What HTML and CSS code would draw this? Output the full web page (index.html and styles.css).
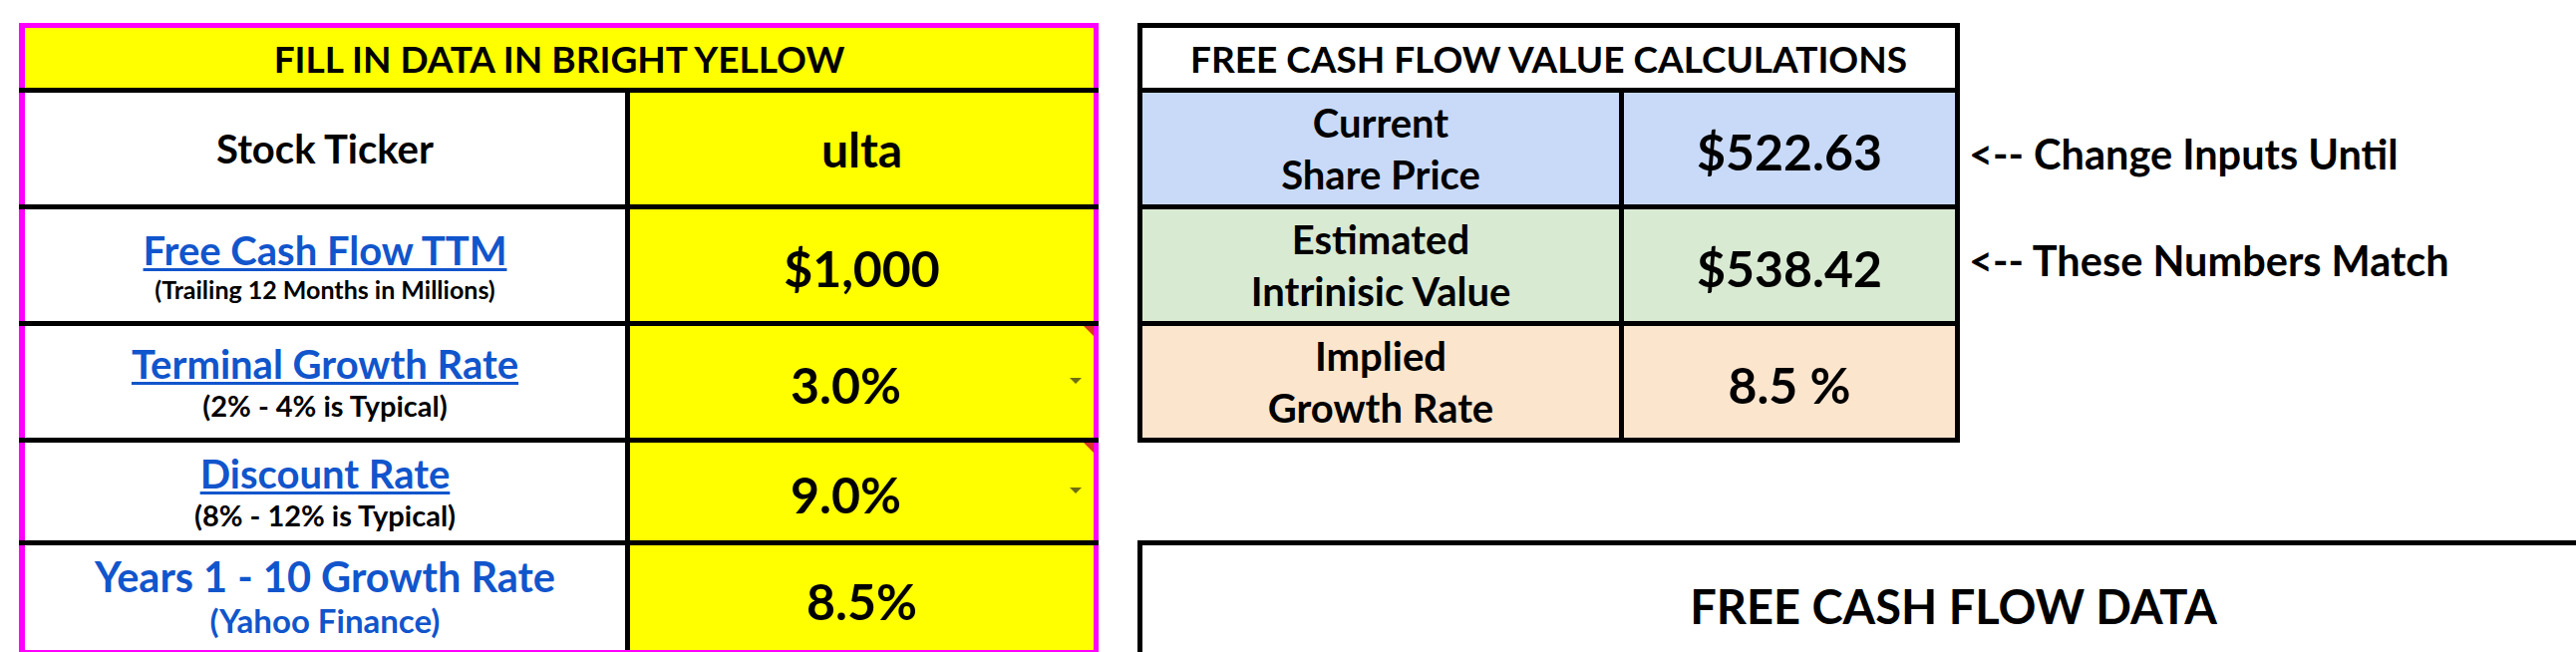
FILE: index.html
```html
<!DOCTYPE html>
<html>
<head>
<meta charset="utf-8">
<link rel="stylesheet" href="styles.css">
</head>
<body>
<div class="sheet">
  <div class="ltable">
    <div class="edge"></div>
    <div class="lhead">FILL IN DATA IN BRIGHT YELLOW</div>
    <div class="sep"></div>
    <div class="lrow h112">
      <div class="lab"><span class="lbl">Stock Ticker</span></div>
      <div class="val ticker">ulta</div>
    </div>
    <div class="sep"></div>
    <div class="lrow h112">
      <div class="lab"><span class="lbl link">Free Cash Flow TTM</span><span class="sub s25">(Trailing 12 Months in Millions)</span></div>
      <div class="val">$1,000</div>
    </div>
    <div class="sep"></div>
    <div class="lrow h112">
      <div class="lab pb2"><span class="lbl link">Terminal Growth Rate</span><span class="sub s29">(2% - 4% is Typical)</span></div>
      <div class="val has-dd">3.0%<span class="cm"></span><span class="dd"></span></div>
    </div>
    <div class="sep"></div>
    <div class="lrow h98">
      <div class="lab pb2"><span class="lbl link">Discount Rate</span><span class="sub s29">(8% - 12% is Typical)</span></div>
      <div class="val has-dd">9.0%<span class="cm"></span><span class="dd"></span></div>
    </div>
    <div class="sep"></div>
    <div class="lrow h105">
      <div class="lab pb4"><span class="lbl big blue">Years 1 - 10 Growth Rate</span><span class="sub s33 blue">(Yahoo Finance)</span></div>
      <div class="val">8.5%</div>
    </div>
    <div class="edge"></div>
  </div>

  <div class="rcol">
    <div class="calc">
      <div class="rtable">
        <div class="rhead">FREE CASH FLOW VALUE CALCULATIONS</div>
        <div class="rl bg-blue">Current<br>Share Price</div>
        <div class="rv bg-blue">$522.63</div>
        <div class="rl bg-green">Estimated<br>Intrinisic Value</div>
        <div class="rv bg-green">$538.42</div>
        <div class="rl bg-peach">Implied<br>Growth Rate</div>
        <div class="rv bg-peach">8.5 %</div>
      </div>
      <div class="notes">
        <div class="note">&lt;-- Change Inputs Until</div>
        <div class="note note2">&lt;-- These Numbers Match</div>
      </div>
    </div>
    <div class="data">FREE CASH FLOW DATA</div>
  </div>
</div>
</body>
</html>
```

FILE: styles.css
```css
html, body {
  margin: 0;
  padding: 0;
  background: #ffffff;
}
body {
  width: 2584px;
  height: 654px;
  overflow: hidden;
  font-family: Lato, "Open Sans", "Liberation Sans", sans-serif;
  font-weight: 700;
  color: #000000;
}
.sheet {
  display: flex;
  align-items: flex-start;
  padding: 23px 0 0 19px;
  gap: 39px;
}

/* left input table */
.ltable {
  flex: none;
  width: 1083px;
}
.edge {
  height: 5px;
  background: #ff00ff;
}
.sep {
  height: 5px;
  background: #000000;
}
.lhead {
  height: 60px;
  background: #ffff00;
  border-left: 6px solid #ff00ff;
  border-right: 5px solid #ff00ff;
  display: flex;
  align-items: center;
  justify-content: center;
  font-size: 37px;
}
.lrow {
  display: grid;
  grid-template-columns: 602px 465px;
  column-gap: 5px;
  background: #000000;
  border-left: 6px solid #ff00ff;
  border-right: 5px solid #ff00ff;
}
.h112 { height: 112px; }
.h98 { height: 98px; }
.h105 { height: 105px; }
.lab {
  background: #ffffff;
  display: flex;
  flex-direction: column;
  align-items: center;
  justify-content: center;
  text-align: center;
}
.pb2 { padding-bottom: 2px; }
.pb4 { padding-bottom: 4px; }
.lbl {
  font-size: 40px;
  line-height: 48px;
}
.lbl.big {
  font-size: 41.5px;
}
.link {
  color: #1155cc;
  text-decoration: underline;
  text-decoration-thickness: 3px;
  text-underline-offset: 3px;
}
.blue { color: #1155cc; }
.sub.s25 {
  font-size: 25px;
  line-height: 30px;
}
.sub.s29 {
  font-size: 29px;
  line-height: 35px;
}
.sub.s33 {
  font-size: 33px;
  line-height: 40px;
}
.val {
  position: relative;
  background: #ffff00;
  display: flex;
  align-items: center;
  justify-content: center;
  font-size: 50px;
  padding-top: 6px;
}
.val.has-dd {
  padding-right: 32px;
}
.val.ticker {
  font-size: 48px;
  padding-top: 0;
}
.dd {
  position: absolute;
  right: 12px;
  top: 50%;
  margin-top: -4px;
  width: 0;
  height: 0;
  border-left: 6px solid transparent;
  border-right: 6px solid transparent;
  border-top: 6px solid #6f6f10;
}
.cm {
  position: absolute;
  top: 0;
  right: 0;
  width: 0;
  height: 0;
  border-top: 10px solid #d9342b;
  border-left: 10px solid transparent;
}

/* right column */
.rcol {
  flex: none;
  display: flex;
  flex-direction: column;
}
.calc {
  display: flex;
  align-items: flex-start;
}
.rtable {
  flex: none;
  display: grid;
  grid-template-columns: 478px 332px;
  grid-template-rows: 60px 112px 112px 112px;
  gap: 5px;
  background: #000000;
  border: 5px solid #000000;
}
.rhead {
  grid-column: 1 / -1;
  background: #ffffff;
  display: flex;
  align-items: center;
  justify-content: center;
  font-size: 37px;
}
.rl {
  display: flex;
  align-items: center;
  justify-content: center;
  text-align: center;
  font-size: 40px;
  line-height: 52px;
}
.rv {
  display: flex;
  align-items: center;
  justify-content: center;
  font-size: 50px;
  padding-top: 6px;
}
.bg-blue { background: #c9daf8; }
.bg-green { background: #d9ead3; }
.bg-peach { background: #fce5cd; }

.notes {
  margin-left: 9px;
  padding-top: 106px;
  font-size: 41.5px;
  line-height: 50px;
  white-space: nowrap;
}
.note2 {
  margin-top: 57px;
}

.data {
  margin-top: 98px;
  width: 1627px;
  height: 105px;
  border-top: 5px solid #000000;
  border-left: 5px solid #000000;
  border-bottom: 2px solid #9a9a9a;
  display: flex;
  align-items: center;
  justify-content: center;
  padding-top: 8px;
  box-sizing: content-box;
  font-size: 47px;
}
```
